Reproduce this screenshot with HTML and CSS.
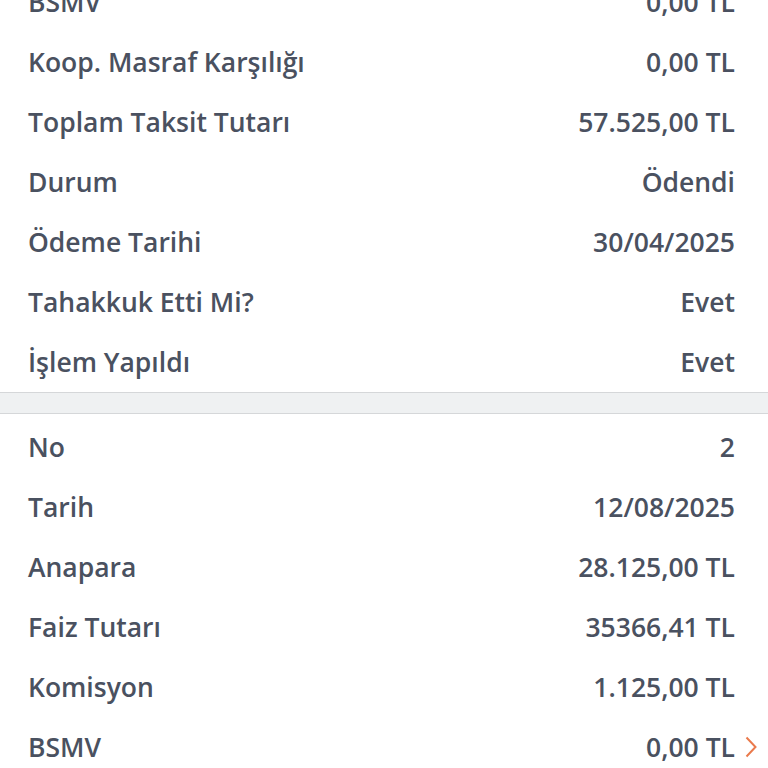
FILE: index.html
```html
<!DOCTYPE html>
<html lang="tr">
<head>
<meta charset="utf-8">
<link rel="stylesheet" href="styles.css">
</head>
<body>
<div class="page">
  <section class="group">
    <div class="row"><span class="label">BSMV</span><span class="value">0,00 TL</span></div>
    <div class="row"><span class="label">Koop. Masraf Karşılığı</span><span class="value">0,00 TL</span></div>
    <div class="row"><span class="label">Toplam Taksit Tutarı</span><span class="value">57.525,00 TL</span></div>
    <div class="row"><span class="label">Durum</span><span class="value">Ödendi</span></div>
    <div class="row"><span class="label">Ödeme Tarihi</span><span class="value">30/04/2025</span></div>
    <div class="row"><span class="label">Tahakkuk Etti Mi?</span><span class="value">Evet</span></div>
    <div class="row"><span class="label">İşlem Yapıldı</span><span class="value">Evet</span></div>
  </section>
  <div class="divider"></div>
  <section class="group second">
    <div class="row"><span class="label">No</span><span class="value">2</span></div>
    <div class="row"><span class="label">Tarih</span><span class="value">12/08/2025</span></div>
    <div class="row"><span class="label">Anapara</span><span class="value">28.125,00 TL</span></div>
    <div class="row"><span class="label">Faiz Tutarı</span><span class="value">35366,41 TL</span></div>
    <div class="row"><span class="label">Komisyon</span><span class="value">1.125,00 TL</span></div>
    <div class="row"><span class="label">BSMV</span><span class="value">0,00 TL</span>
      <svg class="chevron" viewBox="0 0 12 22" width="12" height="22"><path d="M1.5 1.5 L10.5 11 L1.5 20.5" fill="none" stroke="#ea7a4c" stroke-width="2"/></svg>
    </div>
  </section>
</div>
</body>
</html>
```
FILE: styles.css
```css
html, body {
  margin: 0;
  padding: 0;
  background: #ffffff;
}
body {
  font-family: "Open Sans", "Liberation Sans", sans-serif;
  font-weight: 600;
  color: #4a5160;
  overflow: hidden;
}
.page {
  margin-top: -28px;
  display: flex;
  flex-direction: column;
}
.group {
  display: flex;
  flex-direction: column;
  padding: 0 33px 0 28px;
}
.second {
  padding-top: 3px;
}
.row {
  position: relative;
  height: 60px;
  display: flex;
  align-items: center;
  justify-content: space-between;
  font-size: 26.5px;
}
.chevron {
  position: absolute;
  right: -22px;
  top: 19px;
}
.divider {
  height: 20px;
  background: #eff1f2;
  border-top: 1px solid #d5d7d9;
  border-bottom: 1px solid #d5d7d9;
}
```
